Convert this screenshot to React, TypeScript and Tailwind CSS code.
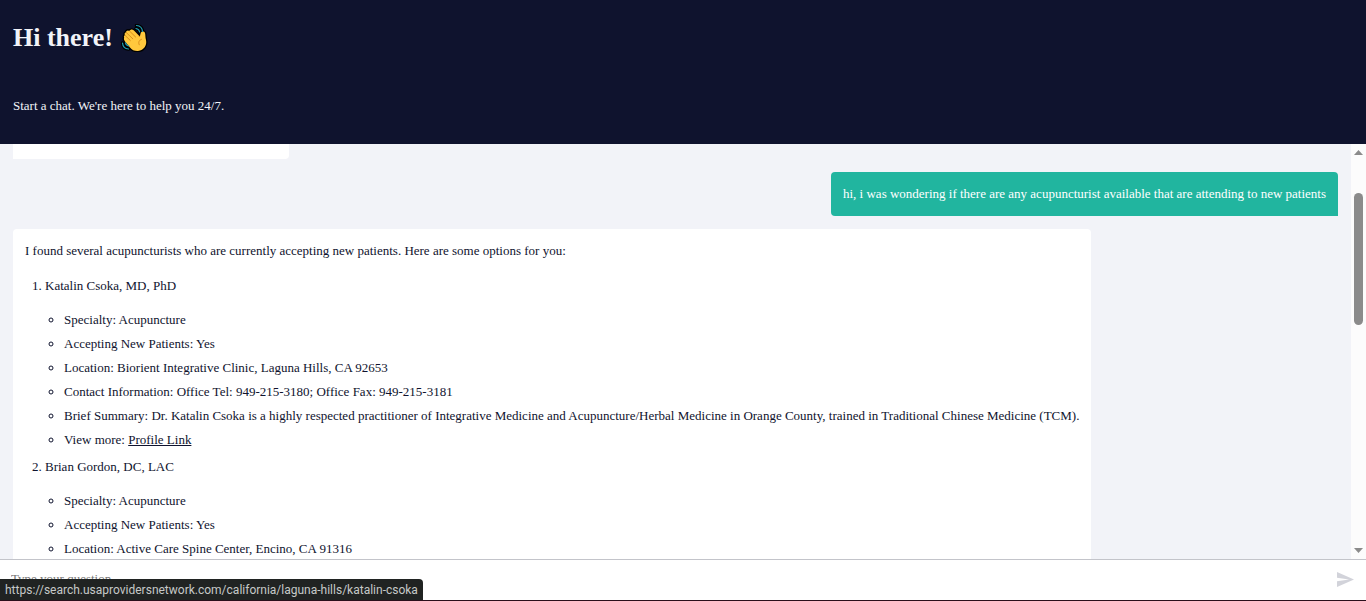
import React from "react";

type Provider = {
  name: string;
  details: string[];
  profile?: string;
};

const providers: Provider[] = [
  {
    name: "Katalin Csoka, MD, PhD",
    details: [
      "Specialty: Acupuncture",
      "Accepting New Patients: Yes",
      "Location: Biorient Integrative Clinic, Laguna Hills, CA 92653",
      "Contact Information: Office Tel: 949-215-3180; Office Fax: 949-215-3181",
      "Brief Summary: Dr. Katalin Csoka is a highly respected practitioner of Integrative Medicine and Acupuncture/Herbal Medicine in Orange County, trained in Traditional Chinese Medicine (TCM).",
    ],
    profile: "https://search.usaprovidersnetwork.com/california/laguna-hills/katalin-csoka",
  },
  {
    name: "Brian Gordon, DC, LAC",
    details: [
      "Specialty: Acupuncture",
      "Accepting New Patients: Yes",
      "Location: Active Care Spine Center, Encino, CA 91316",
    ],
  },
];

const palm =
  "M3.200 13.500C2.600 12.600 3 11.500 4 11.300 3.200 10 3.600 8.600 5 8.300 5.200 6.500 7 5.800 8.500 7 9.500 5 11.500 5 13 6.600L18.800 12.600C19.400 11.200 19.300 10 19.800 8.800 20.500 7.300 23.300 7 24 9 24.600 11 24.200 13 25 16 26.200 21 23 26.500 17 27 13.500 27.200 11 26 9 23.500L4.200 17.700C3 16.300 2.600 14.600 3.200 13.500Z";

function WavingHand() {
  return (
    <svg viewBox="0 0 28 28" className="h-7 w-7" role="img" aria-label="Waving hand">
      <g fill="none" stroke="#000" strokeLinecap="round" strokeLinejoin="round">
        <path d={palm} fill="#000" strokeWidth="2.600" />
        <path
          d="M15.500 1.500C19 1.800 21.300 4 21.500 7.500M15 4.500C17 4.800 18.300 6 18.600 8M1.500 19C1.800 22.500 4 24.700 7.500 25M4.500 18.800C4.700 20.600 6 21.800 7.800 22"
          strokeWidth="3.500"
        />
      </g>
      <path d={palm} fill="#ffc83d" />
      <path
        d="M4.200 11.500 9.300 16.500M5.300 8.600 11.800 14.800M8.800 7.300 14.600 13M18.800 12.600 17.800 12M20.500 15.300C17.900 16.100 17 18.500 18.300 20.800"
        fill="none"
        stroke="#d98e1c"
        strokeWidth="1"
        strokeLinecap="round"
      />
      <path
        d="M15.500 1.500C19 1.800 21.300 4 21.500 7.500M15 4.500C17 4.800 18.300 6 18.600 8M1.500 19C1.800 22.500 4 24.700 7.500 25M4.500 18.800C4.700 20.600 6 21.800 7.800 22"
        fill="none"
        stroke="#209fb5"
        strokeWidth="1.200"
        strokeLinecap="round"
      />
    </svg>
  );
}

function ProviderItem({ name, details, profile }: Provider) {
  return (
    <li>
      {name}
      <ul className="mt-[14px] flex list-[circle] flex-col gap-1 pl-[19px]">
        {details.map((detail) => (
          <li key={detail}>{detail}</li>
        ))}
        {profile && (
          <li>
            View more:{" "}
            <a href={profile} className="underline underline-offset-1">
              Profile Link
            </a>
          </li>
        )}
      </ul>
    </li>
  );
}

function ScrollTrack() {
  return (
    <div className="flex w-[15px] shrink-0 flex-col items-center bg-[#fcfcfc] py-[6px]" aria-hidden="true">
      <svg viewBox="0 0 9 5" className="h-[5px] w-[9px]">
        <path d="M0 5 4.500 0 9 5z" fill="#8b8b8b" />
      </svg>
      <div className="flex w-full flex-1 flex-col items-center pt-[38px]">
        <div className="h-[132px] w-[9px] rounded-full bg-[#8b8b8b]" />
      </div>
      <svg viewBox="0 0 9 5" className="h-[5px] w-[9px]">
        <path d="M0 0 4.500 5 9 0z" fill="#8b8b8b" />
      </svg>
    </div>
  );
}

export default function App() {
  return (
    <div className="relative flex h-screen flex-col overflow-hidden border-b border-[#2a0f1b] bg-white font-['Liberation_Serif','Times_New_Roman',serif] text-[13px] leading-5 text-[#0f132e]">
      <header className="flex shrink-0 flex-col gap-[43px] bg-[#0f132e] px-[13px] pt-[23px] pb-7 text-[#f2f3f8]">
        <h1 className="flex items-center gap-2 text-[26px] leading-[30px] font-bold">
          Hi there! <WavingHand />
        </h1>
        <p>Start a chat. We're here to help you 24/7.</p>
      </header>

      <main className="flex min-h-0 flex-1 bg-[#f2f3f8]">
        <div className="flex min-w-0 flex-1 flex-col gap-[13px] overflow-hidden px-[13px]">
          <div className="h-[15px] w-[276px] shrink-0 rounded-br bg-white" />
          <div className="shrink-0 self-end rounded-t rounded-bl bg-[#21b59f] p-3 text-white">
            hi, i was wondering if there are any acupuncturist available that are attending to new patients
          </div>
          <div className="shrink-0 self-start rounded-t rounded-br bg-white p-3">
            <p>I found several acupuncturists who are currently accepting new patients. Here are some options for you:</p>
            <ol className="mt-[15px] flex list-decimal flex-col gap-[7px] pl-5">
              {providers.map((provider) => (
                <ProviderItem key={provider.name} {...provider} />
              ))}
            </ol>
          </div>
        </div>
        <ScrollTrack />
      </main>

      <form
        className="flex h-[41px] shrink-0 items-center border-t border-[#c3c4ca] bg-white pr-3 pb-[2px] pl-[11px]"
        onSubmit={(event) => event.preventDefault()}
      >
        <input
          type="text"
          aria-label="Type your question"
          placeholder="Type your question"
          className="min-w-0 flex-1 bg-transparent outline-none placeholder:text-[#757575]"
        />
        <button type="submit" aria-label="Send" className="text-[#d2d3da]">
          <svg viewBox="0 0 21 18" className="h-[15px] w-[17px]" preserveAspectRatio="none" fill="currentColor">
            <path d="M0 18 21 9 0 0v7l15 2-15 2z" />
          </svg>
        </button>
      </form>

      <div className="absolute bottom-0 left-0 rounded-tr bg-[#202322] px-[5px] pt-px font-[Roboto,'Open_Sans',sans-serif] text-[12px] leading-5 whitespace-nowrap text-[#c6c9c8]">
        https://search.usaprovidersnetwork.com/california/laguna-hills/katalin-csoka
      </div>
    </div>
  );
}
